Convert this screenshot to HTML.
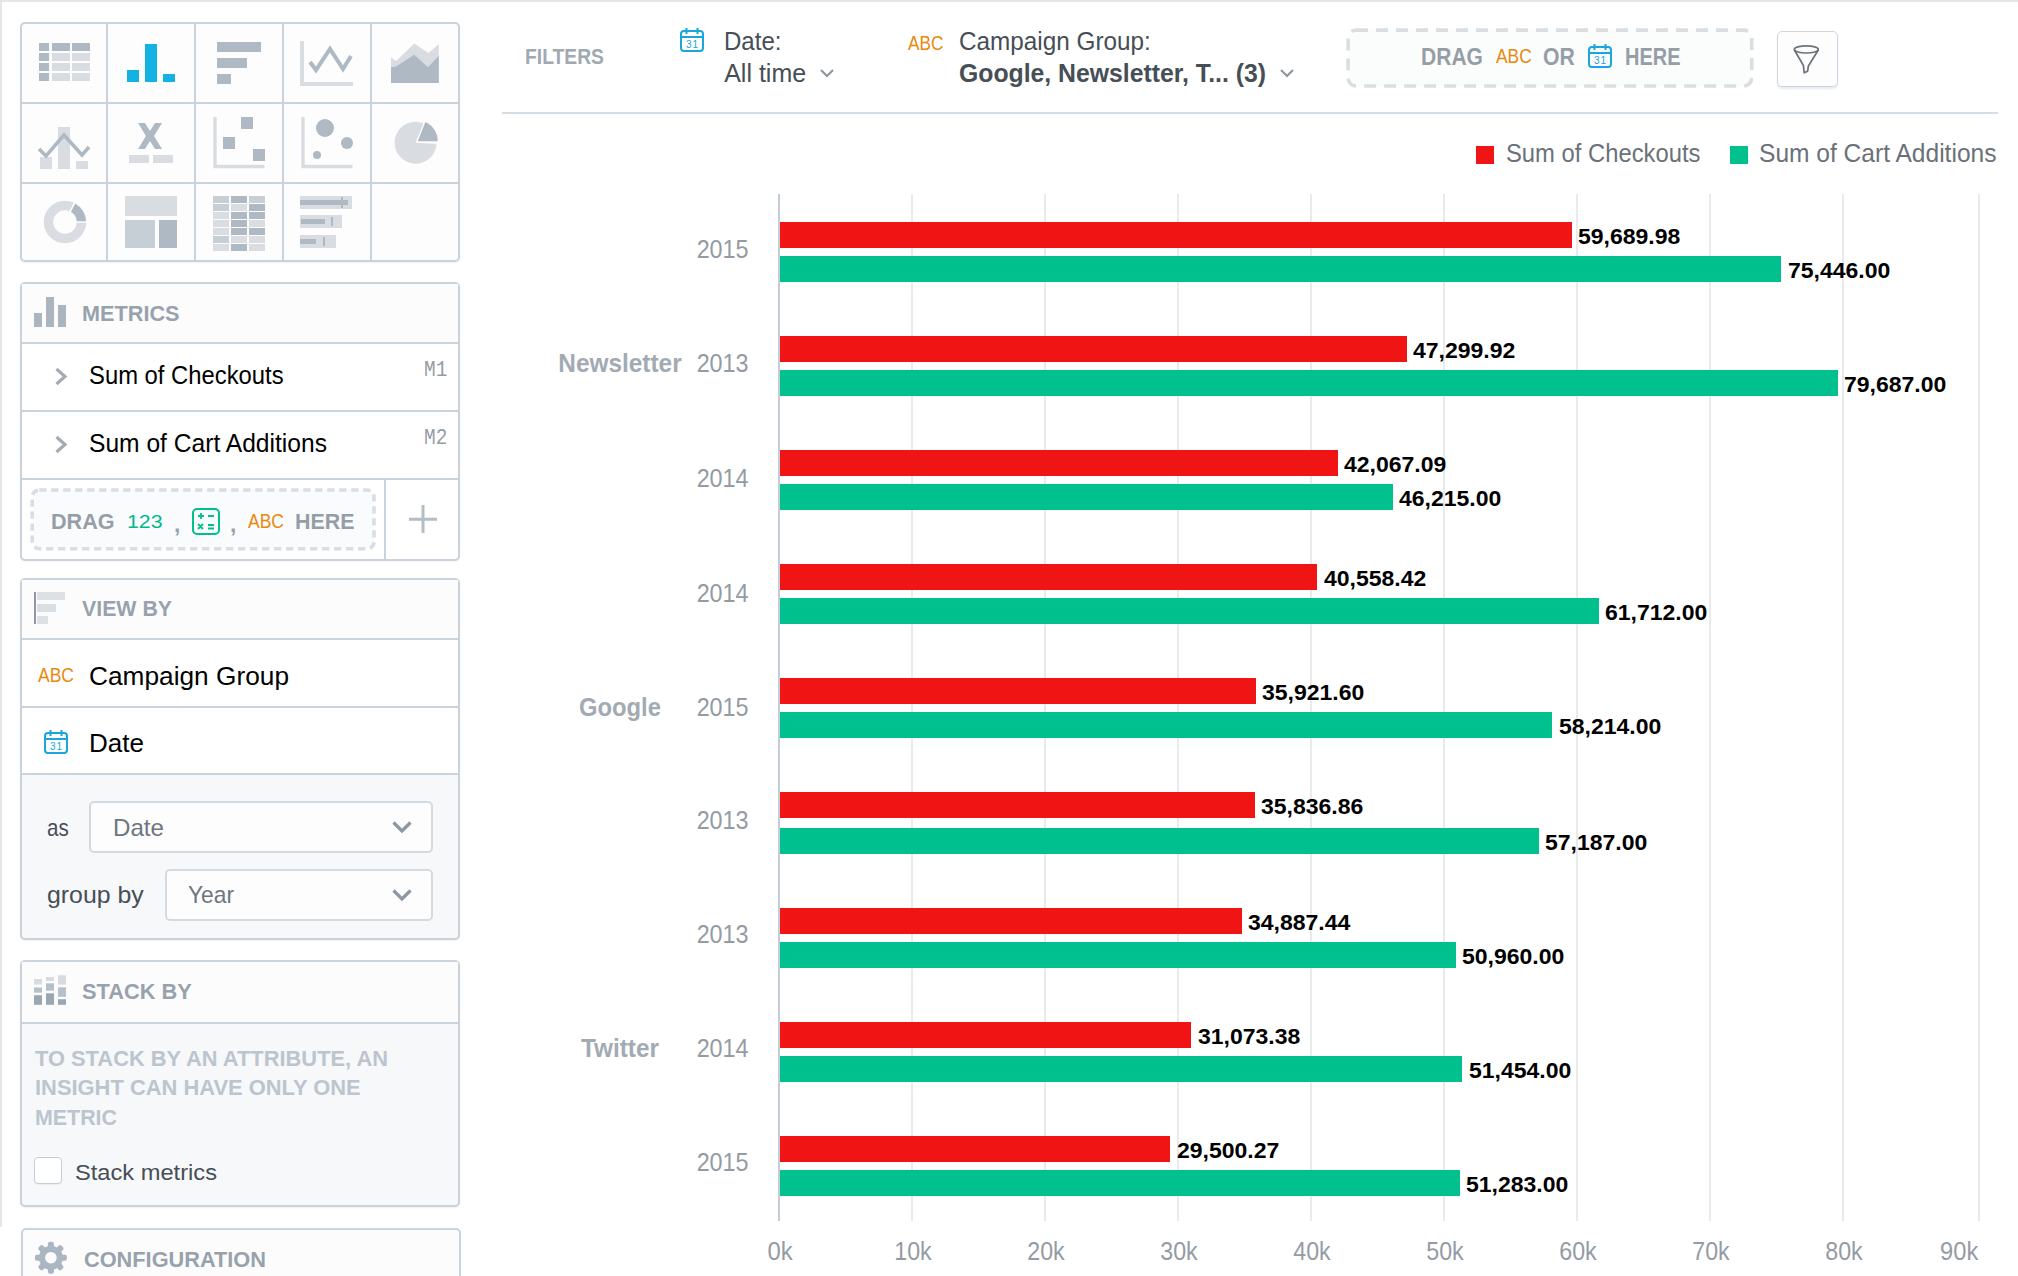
<!DOCTYPE html>
<html><head><meta charset="utf-8"><style>
html,body{margin:0;padding:0;width:2018px;height:1276px;overflow:hidden;background:#fff;position:relative;}
.t{position:absolute;white-space:nowrap;}
svg{overflow:visible}
</style></head><body>
<div style="position:absolute;left:0.0px;top:0.0px;width:2018.0px;height:2.0px;background:#e4e6e8"></div>
<div style="position:absolute;left:0.0px;top:0.0px;width:2.0px;height:1227.0px;background:#e4e6e8"></div>
<div style="position:absolute;left:20.0px;top:22.0px;width:440.0px;height:240.0px;border:2px solid #c8d3dd;border-radius:5px;box-sizing:border-box;background:#fdfdfe;box-shadow:0 1px 2px rgba(0,0,0,0.06)"></div>
<div style="position:absolute;left:106.0px;top:22.0px;width:2.0px;height:240.0px;background:#c8d3dd"></div>
<div style="position:absolute;left:194.0px;top:22.0px;width:2.0px;height:240.0px;background:#c8d3dd"></div>
<div style="position:absolute;left:282.0px;top:22.0px;width:2.0px;height:240.0px;background:#c8d3dd"></div>
<div style="position:absolute;left:370.0px;top:22.0px;width:2.0px;height:240.0px;background:#c8d3dd"></div>
<div style="position:absolute;left:20.0px;top:102.0px;width:440.0px;height:2.0px;background:#c8d3dd"></div>
<div style="position:absolute;left:20.0px;top:182.0px;width:440.0px;height:2.0px;background:#c8d3dd"></div>
<svg style="position:absolute;left:0;top:0" width="480" height="270"><rect x="39" y="43" width="10" height="8" fill="#aeb9c3"/><rect x="52" y="43" width="18" height="8" fill="#aeb9c3"/><rect x="72" y="43" width="18" height="8" fill="#aeb9c3"/><rect x="39" y="53" width="10" height="8" fill="#aeb9c3"/><rect x="52" y="53" width="18" height="8" fill="#d9dde1"/><rect x="72" y="53" width="18" height="8" fill="#d9dde1"/><rect x="39" y="63" width="10" height="8" fill="#aeb9c3"/><rect x="52" y="63" width="18" height="8" fill="#d9dde1"/><rect x="72" y="63" width="18" height="8" fill="#d9dde1"/><rect x="39" y="73" width="10" height="8" fill="#aeb9c3"/><rect x="52" y="73" width="18" height="8" fill="#d9dde1"/><rect x="72" y="73" width="18" height="8" fill="#d9dde1"/><rect x="127" y="70" width="12" height="12" fill="#14b2e2"/><rect x="145" y="44" width="12" height="38" fill="#14b2e2"/><rect x="163" y="74" width="12" height="8" fill="#14b2e2"/><rect x="217" y="42" width="44" height="10" fill="#aeb9c3"/><rect x="217" y="58" width="30" height="10" fill="#aeb9c3"/><rect x="217" y="74" width="14" height="10" fill="#aeb9c3"/><path d="M302 41 V84 H353" stroke="#d9dde1" stroke-width="4" fill="none"/><polyline points="310,62 316,70 330,49 343,69 351,56" stroke="#aeb9c3" stroke-width="4" fill="none" stroke-linejoin="miter"/><path d="M391 57.5 L396 61 L414.3 43.4 L428.5 53 L438.8 44.1 V83 H391Z" fill="#d9dde1"/><path d="M391 67.3 L396 66.4 L414.3 54.8 L428 67.3 L438.8 55.7 V83 H391Z" fill="#aeb9c3"/><rect x="40" y="157" width="12" height="12" fill="#d9dde1"/><rect x="58" y="127" width="12" height="42" fill="#d9dde1"/><rect x="76" y="161" width="12" height="8" fill="#d9dde1"/><polyline points="39,149 46,156 64,135 82,155 89,147" stroke="#aeb9c3" stroke-width="3.5" fill="none"/><path d="M138 123 H145 L150 131 L155 123 H162 L154 136 L162 149 H155 L150 141 L145 149 H138 L146 136Z" fill="#aeb9c3"/><rect x="129" y="155" width="20" height="8" fill="#d9dde1"/><rect x="153" y="155" width="20" height="8" fill="#d9dde1"/><path d="M215 117 V166.5 H264.5" stroke="#d9dde1" stroke-width="3.4" fill="none"/><rect x="241" y="117" width="12" height="12" fill="#aeb9c3"/><rect x="223" y="137" width="12" height="12" fill="#aeb9c3"/><rect x="253" y="149" width="12" height="12" fill="#aeb9c3"/><path d="M303 117 V166.5 H352.5" stroke="#d9dde1" stroke-width="3.4" fill="none"/><circle cx="325" cy="128" r="9" fill="#aeb9c3"/><circle cx="347" cy="143" r="6" fill="#aeb9c3"/><circle cx="317" cy="155" r="4" fill="#aeb9c3"/><circle cx="415.6" cy="142.7" r="21" fill="#d9dde1"/><path d="M415.6 142.7 L424.22 121.37 A23 23 0 0 1 438.57 143.90 Z" fill="#fdfdfe"/><path d="M417.8 141.2 L425.34 122.02 A21 21 0 0 1 437.80 141.20 Z" fill="#aeb9c3"/><circle cx="65" cy="222" r="16.5" fill="none" stroke="#d9dde1" stroke-width="9.5"/><path d="M74.85 203.46 A21 21 0 0 1 86 222 L76.8 222 A11.8 11.8 0 0 0 70.53 211.58 Z" fill="#aeb9c3"/><path d="M65 222 L75.35 201.46 M65 222 L88 222" stroke="#fdfdfe" stroke-width="1.6"/><rect x="125" y="196" width="52" height="20" fill="#d9dde1"/><rect x="125" y="220" width="30" height="28" fill="#c6ced6"/><rect x="159" y="220" width="18" height="28" fill="#aeb9c3"/><rect x="213" y="196" width="16" height="7" fill="#c6ced6"/><rect x="231" y="196" width="16" height="7" fill="#aeb9c3"/><rect x="249" y="196" width="16" height="7" fill="#c6ced6"/><rect x="213" y="204" width="16" height="7" fill="#c6ced6"/><rect x="231" y="204" width="16" height="7" fill="#d9dde1"/><rect x="249" y="204" width="16" height="7" fill="#aeb9c3"/><rect x="213" y="212" width="16" height="7" fill="#d9dde1"/><rect x="231" y="212" width="16" height="7" fill="#aeb9c3"/><rect x="249" y="212" width="16" height="7" fill="#aeb9c3"/><rect x="213" y="220" width="16" height="7" fill="#d9dde1"/><rect x="231" y="220" width="16" height="7" fill="#aeb9c3"/><rect x="249" y="220" width="16" height="7" fill="#d9dde1"/><rect x="213" y="228" width="16" height="7" fill="#d9dde1"/><rect x="231" y="228" width="16" height="7" fill="#aeb9c3"/><rect x="249" y="228" width="16" height="7" fill="#aeb9c3"/><rect x="213" y="236" width="16" height="7" fill="#c6ced6"/><rect x="231" y="236" width="16" height="7" fill="#d9dde1"/><rect x="249" y="236" width="16" height="7" fill="#d9dde1"/><rect x="213" y="244" width="16" height="7" fill="#d9dde1"/><rect x="231" y="244" width="16" height="7" fill="#aeb9c3"/><rect x="249" y="244" width="16" height="7" fill="#d9dde1"/><rect x="300" y="196" width="52" height="13" fill="#d9dde1"/><rect x="300" y="200" width="48" height="5" fill="#aeb9c3"/><rect x="341" y="197" width="2" height="11" fill="#aeb9c3"/><rect x="300" y="215" width="42" height="13" fill="#d9dde1"/><rect x="301" y="219" width="24" height="5" fill="#aeb9c3"/><rect x="331" y="217" width="2" height="9" fill="#aeb9c3"/><rect x="300" y="235" width="36" height="13" fill="#d9dde1"/><rect x="300" y="239" width="16" height="5" fill="#aeb9c3"/><rect x="323" y="237" width="2" height="9" fill="#aeb9c3"/></svg>
<div style="position:absolute;left:20.0px;top:282.0px;width:440.0px;height:279.0px;border:2px solid #c8d3dd;border-radius:5px;box-sizing:border-box;background:#fff;box-shadow:0 1px 2px rgba(0,0,0,0.06)"></div>
<div style="position:absolute;left:22.0px;top:284.0px;width:436.0px;height:58.0px;background:#fcfcfd"></div>
<div style="position:absolute;left:20.0px;top:342.0px;width:440.0px;height:2.0px;background:#c8d3dd"></div>
<div style="position:absolute;left:20.0px;top:410.0px;width:440.0px;height:2.0px;background:#c8d3dd"></div>
<div style="position:absolute;left:20.0px;top:478.0px;width:440.0px;height:2.0px;background:#c8d3dd"></div>
<div style="position:absolute;left:384.0px;top:480.0px;width:2.0px;height:79.0px;background:#c8d3dd"></div>
<svg style="position:absolute;left:0;top:0" width="480" height="600"><rect x="34" y="313" width="8" height="14" fill="#aab5c0"/><rect x="46" y="297" width="8" height="30" fill="#aab5c0"/><rect x="58" y="305" width="8" height="22" fill="#aab5c0"/><polyline points="56.5,369 65,376.5 56.5,384" stroke="#a3acb4" stroke-width="3.2" fill="none"/><polyline points="56.5,437 65,444.5 56.5,452" stroke="#a3acb4" stroke-width="3.2" fill="none"/><path d="M423 505 V533 M409 519.2 H437" stroke="#b3bdc6" stroke-width="3"/></svg>
<div id="t0" class="t" style="left:82.0px;top:302.1px;font-size:22.8px;line-height:22.8px;color:#97a2ad;font-weight:bold;font-family:'Liberation Sans',sans-serif;transform:scaleX(0.9504);transform-origin:left;">METRICS</div>
<div id="t1" class="t" style="left:88.5px;top:361.9px;font-size:26.0px;line-height:26.0px;color:#000;font-weight:normal;font-family:'Liberation Sans',sans-serif;transform:scaleX(0.9160);transform-origin:left;">Sum of Checkouts</div>
<div id="t2" class="t" style="left:423.8px;top:359.1px;font-size:22.3px;line-height:22.3px;color:#959da5;font-weight:normal;font-family:'Liberation Mono',monospace;transform:scaleX(0.8705);transform-origin:left;">M1</div>
<div id="t3" class="t" style="left:88.5px;top:429.9px;font-size:26.0px;line-height:26.0px;color:#000;font-weight:normal;font-family:'Liberation Sans',sans-serif;transform:scaleX(0.9464);transform-origin:left;">Sum of Cart Additions</div>
<div id="t4" class="t" style="left:423.8px;top:427.1px;font-size:22.3px;line-height:22.3px;color:#959da5;font-weight:normal;font-family:'Liberation Mono',monospace;transform:scaleX(0.8705);transform-origin:left;">M2</div>
<div style="position:absolute;left:33.0px;top:490.0px;width:341.0px;height:58.0px;background:#fafbfc;border-radius:6px"></div>
<svg style="position:absolute;left:0;top:0" width="480" height="600"><rect x="32.2" y="490" width="341.8" height="58.7" rx="7" fill="none" stroke="#d9dee2" stroke-width="3.6" stroke-dasharray="7.3 4.7"/></svg>
<div id="t5" class="t" style="left:51.0px;top:511.1px;font-size:22.0px;line-height:22.0px;color:#959ea7;font-weight:bold;font-family:'Liberation Sans',sans-serif;transform:scaleX(0.9802);transform-origin:left;">DRAG</div>
<div id="t6" class="t" style="left:127.0px;top:511.6px;font-size:19.0px;line-height:19.0px;color:#00b98a;font-weight:normal;font-family:'Liberation Sans',sans-serif;transform:scaleX(1.1198);transform-origin:left;">123</div>
<div id="t7" class="t" style="left:174.0px;top:512.5px;font-size:23.0px;line-height:23.0px;color:#9aa3ac;font-weight:bold;font-family:'Liberation Sans',sans-serif;">,</div>
<svg style="position:absolute;left:0;top:0" width="480" height="600"><rect x="193" y="509" width="26" height="25" rx="4" fill="none" stroke="#00c18d" stroke-width="2"/><path d="M198 516 h6 M201 513 v6 M208 516 h6 M198 524 l5 5 M203 524 l-5 5 M208 525 h6 M208 528.5 h6" stroke="#00c18d" stroke-width="1.8"/></svg>
<div id="t8" class="t" style="left:230.0px;top:512.5px;font-size:23.0px;line-height:23.0px;color:#9aa3ac;font-weight:bold;font-family:'Liberation Sans',sans-serif;">,</div>
<div id="t9" class="t" style="left:248.0px;top:510.8px;font-size:20.0px;line-height:20.0px;color:#e8890c;font-weight:normal;font-family:'Liberation Sans',sans-serif;transform:scaleX(0.8754);transform-origin:left;">ABC</div>
<div id="t10" class="t" style="left:295.0px;top:511.3px;font-size:22.0px;line-height:22.0px;color:#959ea7;font-weight:bold;font-family:'Liberation Sans',sans-serif;transform:scaleX(0.9734);transform-origin:left;">HERE</div>
<div style="position:absolute;left:20.0px;top:578.0px;width:440.0px;height:362.0px;border:2px solid #c8d3dd;border-radius:5px;box-sizing:border-box;background:#f7f8fa;box-shadow:0 1px 2px rgba(0,0,0,0.06)"></div>
<div style="position:absolute;left:22.0px;top:580.0px;width:436.0px;height:58.0px;background:#fcfcfd"></div>
<div style="position:absolute;left:20.0px;top:638.0px;width:440.0px;height:2.0px;background:#c8d3dd"></div>
<div style="position:absolute;left:22.0px;top:640.0px;width:436.0px;height:66.0px;background:#fff"></div>
<div style="position:absolute;left:20.0px;top:706.0px;width:440.0px;height:2.0px;background:#c8d3dd"></div>
<div style="position:absolute;left:22.0px;top:708.0px;width:436.0px;height:65.0px;background:#fff"></div>
<div style="position:absolute;left:20.0px;top:773.0px;width:440.0px;height:2.0px;background:#c8d3dd"></div>
<svg style="position:absolute;left:0;top:0" width="480" height="1000"><rect x="34" y="592" width="2" height="32" fill="#8c99a6"/><rect x="37" y="592" width="28" height="8" fill="#dde1e4"/><rect x="37" y="604" width="19" height="8" fill="#d8dfe5"/><rect x="37" y="616" width="11" height="8" fill="#dde1e4"/></svg>
<div id="t11" class="t" style="left:82.0px;top:596.6px;font-size:22.8px;line-height:22.8px;color:#97a2ad;font-weight:bold;font-family:'Liberation Sans',sans-serif;transform:scaleX(0.9349);transform-origin:left;">VIEW BY</div>
<div id="t12" class="t" style="left:38.0px;top:664.7px;font-size:20.0px;line-height:20.0px;color:#e8890c;font-weight:normal;font-family:'Liberation Sans',sans-serif;transform:scaleX(0.8754);transform-origin:left;">ABC</div>
<div id="t13" class="t" style="left:88.7px;top:662.5px;font-size:26.0px;line-height:26.0px;color:#000;font-weight:normal;font-family:'Liberation Sans',sans-serif;transform:scaleX(1.0101);transform-origin:left;">Campaign Group</div>
<div id="t14" class="t" style="left:88.7px;top:729.9px;font-size:26.0px;line-height:26.0px;color:#000;font-weight:normal;font-family:'Liberation Sans',sans-serif;transform:scaleX(1.0014);transform-origin:left;">Date</div>
<svg style="position:absolute;left:0;top:0" width="2018" height="1276"><rect x="45.0" y="733.0" width="22" height="20" rx="3" fill="none" stroke="#1aa6dc" stroke-width="2"/><path d="M44.0 739.0 H68.0 M50.5 730.0 V736.0 M61.5 730.0 V736.0" stroke="#1aa6dc" stroke-width="2"/><text x="56.5" y="749.6" font-size="10" font-family="Liberation Sans" fill="#1aa6dc" text-anchor="middle" letter-spacing="1">31</text></svg>
<div style="position:absolute;left:89.0px;top:801.0px;width:344.0px;height:52.0px;border:2px solid #d3dae2;border-radius:5px;box-sizing:border-box;background:#fdfdfe"></div>
<div style="position:absolute;left:165.0px;top:869.0px;width:268.0px;height:52.0px;border:2px solid #d3dae2;border-radius:5px;box-sizing:border-box;background:#fdfdfe"></div>
<svg style="position:absolute;left:0;top:0" width="480" height="1000"><polyline points="393.5,822.5 402,831 410.5,822.5" stroke="#8e979f" stroke-width="3.2" fill="none"/><polyline points="393.5,890.5 402,899 410.5,890.5" stroke="#8e979f" stroke-width="3.2" fill="none"/></svg>
<div id="t15" class="t" style="left:46.8px;top:815.6px;font-size:24.0px;line-height:24.0px;color:#464e56;font-weight:normal;font-family:'Liberation Sans',sans-serif;transform:scaleX(0.8557);transform-origin:left;">as</div>
<div id="t16" class="t" style="left:113.0px;top:815.6px;font-size:24.0px;line-height:24.0px;color:#6d7680;font-weight:normal;font-family:'Liberation Sans',sans-serif;transform:scaleX(1.0059);transform-origin:left;">Date</div>
<div id="t17" class="t" style="left:46.8px;top:883.1px;font-size:24.0px;line-height:24.0px;color:#464e56;font-weight:normal;font-family:'Liberation Sans',sans-serif;transform:scaleX(1.0353);transform-origin:left;">group by</div>
<div id="t18" class="t" style="left:187.6px;top:883.1px;font-size:24.0px;line-height:24.0px;color:#6d7680;font-weight:normal;font-family:'Liberation Sans',sans-serif;transform:scaleX(0.9485);transform-origin:left;">Year</div>
<div style="position:absolute;left:20.0px;top:960.0px;width:440.0px;height:247.0px;border:2px solid #c8d3dd;border-radius:5px;box-sizing:border-box;background:#f7f8fa;box-shadow:0 1px 2px rgba(0,0,0,0.06)"></div>
<div style="position:absolute;left:22.0px;top:962.0px;width:436.0px;height:60.0px;background:#fcfcfd"></div>
<div style="position:absolute;left:20.0px;top:1022.0px;width:440.0px;height:2.0px;background:#c8d3dd"></div>
<svg style="position:absolute;left:0;top:0" width="480" height="1276"><rect x="34" y="979.0" width="8" height="5.5" fill="#d8dcdf"/><rect x="34" y="987.5" width="8" height="5.2" fill="#b5c0ca"/><rect x="34" y="995.2" width="8" height="9.6" fill="#9ba7b1"/><rect x="46" y="977.0" width="8" height="4.0" fill="#d8dcdf"/><rect x="46" y="983.3" width="8" height="7.4" fill="#b5c0ca"/><rect x="46" y="993.3" width="8" height="11.5" fill="#9ba7b1"/><rect x="58" y="975.2" width="8" height="9.4" fill="#d8dcdf"/><rect x="58" y="987.3" width="8" height="9.5" fill="#b5c0ca"/><rect x="58" y="999.2" width="8" height="5.6" fill="#9ba7b1"/></svg>
<div id="t19" class="t" style="left:82.4px;top:979.6px;font-size:22.8px;line-height:22.8px;color:#97a2ad;font-weight:bold;font-family:'Liberation Sans',sans-serif;transform:scaleX(0.9561);transform-origin:left;">STACK BY</div>
<div id="t20" class="t" style="left:35.0px;top:1047.7px;font-size:22.0px;line-height:22.0px;color:#bcc5ce;font-weight:bold;font-family:'Liberation Sans',sans-serif;transform:scaleX(0.9936);transform-origin:left;">TO STACK BY AN ATTRIBUTE, AN</div>
<div id="t21" class="t" style="left:35.0px;top:1077.3px;font-size:22.0px;line-height:22.0px;color:#bcc5ce;font-weight:bold;font-family:'Liberation Sans',sans-serif;transform:scaleX(0.9954);transform-origin:left;">INSIGHT CAN HAVE ONLY ONE</div>
<div id="t22" class="t" style="left:35.0px;top:1106.9px;font-size:22.0px;line-height:22.0px;color:#bcc5ce;font-weight:bold;font-family:'Liberation Sans',sans-serif;transform:scaleX(0.9724);transform-origin:left;">METRIC</div>
<div style="position:absolute;left:34.0px;top:1156.5px;width:28.0px;height:27.5px;border:1.6px solid #c3ced8;border-radius:4px;box-sizing:border-box;background:#fff;box-shadow:0 1px 1px rgba(0,0,0,0.05)"></div>
<div id="t23" class="t" style="left:75.0px;top:1161.5px;font-size:22.0px;line-height:22.0px;color:#464e56;font-weight:normal;font-family:'Liberation Sans',sans-serif;transform:scaleX(1.0755);transform-origin:left;">Stack metrics</div>
<div style="position:absolute;left:21.0px;top:1228.0px;width:440.0px;height:60.0px;border:2px solid #c8d3dd;border-radius:5px;box-sizing:border-box;background:#fcfcfd"></div>
<svg style="position:absolute;left:0;top:0" width="480" height="1276"><g transform="translate(50.9 1257.7)" fill="#aab6c1"><rect x="-3" y="-16" width="6" height="8" rx="2" transform="rotate(0)"/><rect x="-3" y="-16" width="6" height="8" rx="2" transform="rotate(45)"/><rect x="-3" y="-16" width="6" height="8" rx="2" transform="rotate(90)"/><rect x="-3" y="-16" width="6" height="8" rx="2" transform="rotate(135)"/><rect x="-3" y="-16" width="6" height="8" rx="2" transform="rotate(180)"/><rect x="-3" y="-16" width="6" height="8" rx="2" transform="rotate(225)"/><rect x="-3" y="-16" width="6" height="8" rx="2" transform="rotate(270)"/><rect x="-3" y="-16" width="6" height="8" rx="2" transform="rotate(315)"/><circle r="12"/><circle r="5.8" fill="#fcfcfd"/></g></svg>
<div id="t24" class="t" style="left:83.7px;top:1247.8px;font-size:22.8px;line-height:22.8px;color:#97a2ad;font-weight:bold;font-family:'Liberation Sans',sans-serif;transform:scaleX(0.9538);transform-origin:left;">CONFIGURATION</div>
<div style="position:absolute;left:502.0px;top:112.0px;width:1496.0px;height:2.0px;background:#d5dde5"></div>
<div id="t25" class="t" style="left:524.7px;top:45.4px;font-size:22.8px;line-height:22.8px;color:#a0a9b2;font-weight:bold;font-family:'Liberation Sans',sans-serif;transform:scaleX(0.8468);transform-origin:left;">FILTERS</div>
<svg style="position:absolute;left:0;top:0" width="2018" height="1276"><rect x="681.0" y="31.0" width="22" height="20" rx="3" fill="none" stroke="#1aa6dc" stroke-width="2"/><path d="M680.0 37.0 H704.0 M686.5 28.0 V34.0 M697.5 28.0 V34.0" stroke="#1aa6dc" stroke-width="2"/><text x="692.5" y="47.6" font-size="10" font-family="Liberation Sans" fill="#1aa6dc" text-anchor="middle" letter-spacing="1">31</text></svg>
<div id="t26" class="t" style="left:724.2px;top:29.0px;font-size:25.0px;line-height:25.0px;color:#464e56;font-weight:normal;font-family:'Liberation Sans',sans-serif;transform:scaleX(0.9621);transform-origin:left;">Date:</div>
<div id="t27" class="t" style="left:724.2px;top:60.5px;font-size:25.0px;line-height:25.0px;color:#464e56;font-weight:normal;font-family:'Liberation Sans',sans-serif;">All time</div>
<svg style="position:absolute;left:0;top:0" width="1400" height="120"><polyline points="821,70 827,76 833,70" stroke="#8e979f" stroke-width="2.2" fill="none"/><polyline points="1281,70 1287,76 1293,70" stroke="#8e979f" stroke-width="2.2" fill="none"/></svg>
<div id="t28" class="t" style="left:908.3px;top:33.3px;font-size:20.0px;line-height:20.0px;color:#e8890c;font-weight:normal;font-family:'Liberation Sans',sans-serif;transform:scaleX(0.8608);transform-origin:left;">ABC</div>
<div id="t29" class="t" style="left:959.4px;top:29.0px;font-size:25.0px;line-height:25.0px;color:#464e56;font-weight:normal;font-family:'Liberation Sans',sans-serif;transform:scaleX(0.9720);transform-origin:left;">Campaign Group:</div>
<div id="t30" class="t" style="left:959.4px;top:60.5px;font-size:25.0px;line-height:25.0px;color:#464e56;font-weight:bold;font-family:'Liberation Sans',sans-serif;transform:scaleX(0.9910);transform-origin:left;">Google, Newsletter, T... (3)</div>
<div style="position:absolute;left:1348.0px;top:30.0px;width:404.0px;height:56.0px;background:#fbfcfc;border-radius:7px"></div>
<svg style="position:absolute;left:0;top:0" width="2018" height="200"><rect x="1348.1" y="30.1" width="403.6" height="55.9" rx="8" fill="none" stroke="#d9dee2" stroke-width="3.6" stroke-dasharray="12 8"/></svg>
<div id="t31" class="t" style="left:1421.4px;top:46.2px;font-size:23.3px;line-height:23.3px;color:#959ea7;font-weight:bold;font-family:'Liberation Sans',sans-serif;transform:scaleX(0.9037);transform-origin:left;">DRAG</div>
<div id="t32" class="t" style="left:1496.0px;top:47.2px;font-size:19.3px;line-height:19.3px;color:#e8890c;font-weight:normal;font-family:'Liberation Sans',sans-serif;transform:scaleX(0.9028);transform-origin:left;">ABC</div>
<div id="t33" class="t" style="left:1543.0px;top:46.2px;font-size:23.3px;line-height:23.3px;color:#959ea7;font-weight:bold;font-family:'Liberation Sans',sans-serif;transform:scaleX(0.9098);transform-origin:left;">OR</div>
<svg style="position:absolute;left:0;top:0" width="2018" height="1276"><rect x="1589.0" y="47.0" width="22" height="20" rx="3" fill="none" stroke="#1aa6dc" stroke-width="2"/><path d="M1588.0 53.0 H1612.0 M1594.5 44.0 V50.0 M1605.5 44.0 V50.0" stroke="#1aa6dc" stroke-width="2"/><text x="1600.5" y="63.6" font-size="10" font-family="Liberation Sans" fill="#1aa6dc" text-anchor="middle" letter-spacing="1">31</text></svg>
<div id="t34" class="t" style="left:1625.0px;top:46.2px;font-size:23.3px;line-height:23.3px;color:#959ea7;font-weight:bold;font-family:'Liberation Sans',sans-serif;transform:scaleX(0.8573);transform-origin:left;">HERE</div>
<div style="position:absolute;left:1777.0px;top:30.5px;width:60.5px;height:56.0px;border:1.6px solid #cdd6de;border-radius:5px;box-sizing:border-box;background:#fdfdfe;box-shadow:0 2px 2px rgba(30,50,80,0.10)"></div>
<svg style="position:absolute;left:0;top:0" width="2018" height="200"><ellipse cx="1806.3" cy="49.4" rx="12" ry="3.6" fill="none" stroke="#6b737b" stroke-width="1.7"/><path d="M1794.4 50 L1803.4 65.5 L1804.2 72.8 L1807.6 71.2 L1808.4 66 L1818.3 50" fill="none" stroke="#6b737b" stroke-width="1.7" stroke-linejoin="round"/></svg>
<div style="position:absolute;left:1476.0px;top:146.0px;width:18.0px;height:18.0px;background:#f01414"></div>
<div id="t35" class="t" style="left:1505.6px;top:141.3px;font-size:25.5px;line-height:25.5px;color:#6a7179;font-weight:normal;font-family:'Liberation Sans',sans-serif;transform:scaleX(0.9330);transform-origin:left;">Sum of Checkouts</div>
<div style="position:absolute;left:1730.0px;top:146.0px;width:18.0px;height:18.0px;background:#00c18d"></div>
<div id="t36" class="t" style="left:1759.0px;top:141.3px;font-size:25.5px;line-height:25.5px;color:#6a7179;font-weight:normal;font-family:'Liberation Sans',sans-serif;transform:scaleX(0.9630);transform-origin:left;">Sum of Cart Additions</div>
<div style="position:absolute;left:911.0px;top:194.0px;width:2.0px;height:1027.0px;background:#e9eaec"></div>
<div style="position:absolute;left:1044.0px;top:194.0px;width:2.0px;height:1027.0px;background:#e9eaec"></div>
<div style="position:absolute;left:1177.0px;top:194.0px;width:2.0px;height:1027.0px;background:#e9eaec"></div>
<div style="position:absolute;left:1310.0px;top:194.0px;width:2.0px;height:1027.0px;background:#e9eaec"></div>
<div style="position:absolute;left:1443.0px;top:194.0px;width:2.0px;height:1027.0px;background:#e9eaec"></div>
<div style="position:absolute;left:1576.0px;top:194.0px;width:2.0px;height:1027.0px;background:#e9eaec"></div>
<div style="position:absolute;left:1709.0px;top:194.0px;width:2.0px;height:1027.0px;background:#e9eaec"></div>
<div style="position:absolute;left:1842.0px;top:194.0px;width:2.0px;height:1027.0px;background:#e9eaec"></div>
<div style="position:absolute;left:1978.0px;top:194.0px;width:2.0px;height:1027.0px;background:#e9eaec"></div>
<div style="position:absolute;left:778.0px;top:194.0px;width:2.0px;height:1027.0px;background:#c3cdd8"></div>
<div style="position:absolute;left:780.0px;top:222.0px;width:791.9px;height:26.0px;background:#f01414"></div>
<div style="position:absolute;left:780.0px;top:256.0px;width:1001.4px;height:26.0px;background:#00c18d"></div>
<div id="t37" class="t" style="left:1578.2px;top:224.5px;font-size:22.7px;line-height:22.7px;color:#000;font-weight:bold;font-family:'Liberation Sans',sans-serif;transform:scaleX(1.0135);transform-origin:left;">59,689.98</div>
<div id="t38" class="t" style="left:1787.7px;top:258.5px;font-size:22.7px;line-height:22.7px;color:#000;font-weight:bold;font-family:'Liberation Sans',sans-serif;transform:scaleX(1.0135);transform-origin:left;">75,446.00</div>
<div id="t39" class="t" style="right:1269.0px;top:236.6px;font-size:25.0px;line-height:25.0px;color:#949ba3;font-weight:normal;font-family:'Liberation Sans',sans-serif;transform:scaleX(0.9348);transform-origin:right;">2015</div>
<div style="position:absolute;left:780.0px;top:336.0px;width:627.1px;height:26.0px;background:#f01414"></div>
<div style="position:absolute;left:780.0px;top:370.0px;width:1057.8px;height:26.0px;background:#00c18d"></div>
<div id="t40" class="t" style="left:1413.4px;top:338.5px;font-size:22.7px;line-height:22.7px;color:#000;font-weight:bold;font-family:'Liberation Sans',sans-serif;transform:scaleX(1.0135);transform-origin:left;">47,299.92</div>
<div id="t41" class="t" style="left:1844.1px;top:372.5px;font-size:22.7px;line-height:22.7px;color:#000;font-weight:bold;font-family:'Liberation Sans',sans-serif;transform:scaleX(1.0135);transform-origin:left;">79,687.00</div>
<div id="t42" class="t" style="right:1269.0px;top:350.6px;font-size:25.0px;line-height:25.0px;color:#949ba3;font-weight:normal;font-family:'Liberation Sans',sans-serif;transform:scaleX(0.9348);transform-origin:right;">2013</div>
<div id="t43" class="t" style="left:619.5px;top:350.6px;font-size:25.0px;line-height:25.0px;color:#a2aab2;font-weight:bold;font-family:'Liberation Sans',sans-serif;transform:translateX(-50%) scaleX(0.9751);">Newsletter</div>
<div style="position:absolute;left:780.0px;top:450.0px;width:557.5px;height:26.0px;background:#f01414"></div>
<div style="position:absolute;left:780.0px;top:484.0px;width:612.7px;height:26.0px;background:#00c18d"></div>
<div id="t44" class="t" style="left:1343.8px;top:452.5px;font-size:22.7px;line-height:22.7px;color:#000;font-weight:bold;font-family:'Liberation Sans',sans-serif;transform:scaleX(1.0135);transform-origin:left;">42,067.09</div>
<div id="t45" class="t" style="left:1399.0px;top:486.5px;font-size:22.7px;line-height:22.7px;color:#000;font-weight:bold;font-family:'Liberation Sans',sans-serif;transform:scaleX(1.0135);transform-origin:left;">46,215.00</div>
<div id="t46" class="t" style="right:1269.0px;top:466.1px;font-size:25.0px;line-height:25.0px;color:#949ba3;font-weight:normal;font-family:'Liberation Sans',sans-serif;transform:scaleX(0.9348);transform-origin:right;">2014</div>
<div style="position:absolute;left:780.0px;top:564.0px;width:537.4px;height:26.0px;background:#f01414"></div>
<div style="position:absolute;left:780.0px;top:598.0px;width:818.8px;height:26.0px;background:#00c18d"></div>
<div id="t47" class="t" style="left:1323.7px;top:566.5px;font-size:22.7px;line-height:22.7px;color:#000;font-weight:bold;font-family:'Liberation Sans',sans-serif;transform:scaleX(1.0135);transform-origin:left;">40,558.42</div>
<div id="t48" class="t" style="left:1605.1px;top:600.5px;font-size:22.7px;line-height:22.7px;color:#000;font-weight:bold;font-family:'Liberation Sans',sans-serif;transform:scaleX(1.0135);transform-origin:left;">61,712.00</div>
<div id="t49" class="t" style="right:1269.0px;top:580.8px;font-size:25.0px;line-height:25.0px;color:#949ba3;font-weight:normal;font-family:'Liberation Sans',sans-serif;transform:scaleX(0.9348);transform-origin:right;">2014</div>
<div style="position:absolute;left:780.0px;top:678.0px;width:475.8px;height:26.0px;background:#f01414"></div>
<div style="position:absolute;left:780.0px;top:712.0px;width:772.2px;height:26.0px;background:#00c18d"></div>
<div id="t50" class="t" style="left:1262.1px;top:680.5px;font-size:22.7px;line-height:22.7px;color:#000;font-weight:bold;font-family:'Liberation Sans',sans-serif;transform:scaleX(1.0135);transform-origin:left;">35,921.60</div>
<div id="t51" class="t" style="left:1558.5px;top:714.5px;font-size:22.7px;line-height:22.7px;color:#000;font-weight:bold;font-family:'Liberation Sans',sans-serif;transform:scaleX(1.0135);transform-origin:left;">58,214.00</div>
<div id="t52" class="t" style="right:1269.0px;top:694.5px;font-size:25.0px;line-height:25.0px;color:#949ba3;font-weight:normal;font-family:'Liberation Sans',sans-serif;transform:scaleX(0.9348);transform-origin:right;">2015</div>
<div id="t53" class="t" style="left:619.5px;top:694.5px;font-size:25.0px;line-height:25.0px;color:#a2aab2;font-weight:bold;font-family:'Liberation Sans',sans-serif;transform:translateX(-50%) scaleX(0.9500);">Google</div>
<div style="position:absolute;left:780.0px;top:792.0px;width:474.6px;height:26.0px;background:#f01414"></div>
<div style="position:absolute;left:780.0px;top:828.0px;width:758.6px;height:26.0px;background:#00c18d"></div>
<div id="t54" class="t" style="left:1260.9px;top:794.5px;font-size:22.7px;line-height:22.7px;color:#000;font-weight:bold;font-family:'Liberation Sans',sans-serif;transform:scaleX(1.0135);transform-origin:left;">35,836.86</div>
<div id="t55" class="t" style="left:1544.9px;top:830.5px;font-size:22.7px;line-height:22.7px;color:#000;font-weight:bold;font-family:'Liberation Sans',sans-serif;transform:scaleX(1.0135);transform-origin:left;">57,187.00</div>
<div id="t56" class="t" style="right:1269.0px;top:808.0px;font-size:25.0px;line-height:25.0px;color:#949ba3;font-weight:normal;font-family:'Liberation Sans',sans-serif;transform:scaleX(0.9348);transform-origin:right;">2013</div>
<div style="position:absolute;left:780.0px;top:908.0px;width:462.0px;height:26.0px;background:#f01414"></div>
<div style="position:absolute;left:780.0px;top:942.0px;width:675.8px;height:26.0px;background:#00c18d"></div>
<div id="t57" class="t" style="left:1248.3px;top:910.5px;font-size:22.7px;line-height:22.7px;color:#000;font-weight:bold;font-family:'Liberation Sans',sans-serif;transform:scaleX(1.0135);transform-origin:left;">34,887.44</div>
<div id="t58" class="t" style="left:1462.1px;top:944.5px;font-size:22.7px;line-height:22.7px;color:#000;font-weight:bold;font-family:'Liberation Sans',sans-serif;transform:scaleX(1.0135);transform-origin:left;">50,960.00</div>
<div id="t59" class="t" style="right:1269.0px;top:922.2px;font-size:25.0px;line-height:25.0px;color:#949ba3;font-weight:normal;font-family:'Liberation Sans',sans-serif;transform:scaleX(0.9348);transform-origin:right;">2013</div>
<div style="position:absolute;left:780.0px;top:1022.0px;width:411.3px;height:26.0px;background:#f01414"></div>
<div style="position:absolute;left:780.0px;top:1056.0px;width:682.3px;height:26.0px;background:#00c18d"></div>
<div id="t60" class="t" style="left:1197.6px;top:1024.5px;font-size:22.7px;line-height:22.7px;color:#000;font-weight:bold;font-family:'Liberation Sans',sans-serif;transform:scaleX(1.0135);transform-origin:left;">31,073.38</div>
<div id="t61" class="t" style="left:1468.6px;top:1058.5px;font-size:22.7px;line-height:22.7px;color:#000;font-weight:bold;font-family:'Liberation Sans',sans-serif;transform:scaleX(1.0135);transform-origin:left;">51,454.00</div>
<div id="t62" class="t" style="right:1269.0px;top:1036.3px;font-size:25.0px;line-height:25.0px;color:#949ba3;font-weight:normal;font-family:'Liberation Sans',sans-serif;transform:scaleX(0.9348);transform-origin:right;">2014</div>
<div id="t63" class="t" style="left:619.5px;top:1036.3px;font-size:25.0px;line-height:25.0px;color:#a2aab2;font-weight:bold;font-family:'Liberation Sans',sans-serif;transform:translateX(-50%) scaleX(0.9739);">Twitter</div>
<div style="position:absolute;left:780.0px;top:1136.0px;width:390.4px;height:26.0px;background:#f01414"></div>
<div style="position:absolute;left:780.0px;top:1170.0px;width:680.1px;height:26.0px;background:#00c18d"></div>
<div id="t64" class="t" style="left:1176.7px;top:1138.5px;font-size:22.7px;line-height:22.7px;color:#000;font-weight:bold;font-family:'Liberation Sans',sans-serif;transform:scaleX(1.0135);transform-origin:left;">29,500.27</div>
<div id="t65" class="t" style="left:1466.4px;top:1172.5px;font-size:22.7px;line-height:22.7px;color:#000;font-weight:bold;font-family:'Liberation Sans',sans-serif;transform:scaleX(1.0135);transform-origin:left;">51,283.00</div>
<div id="t66" class="t" style="right:1269.0px;top:1150.3px;font-size:25.0px;line-height:25.0px;color:#949ba3;font-weight:normal;font-family:'Liberation Sans',sans-serif;transform:scaleX(0.9348);transform-origin:right;">2015</div>
<div id="t67" class="t" style="left:779.5px;top:1238.8px;font-size:25.0px;line-height:25.0px;color:#949ba3;font-weight:normal;font-family:'Liberation Sans',sans-serif;transform:translateX(-50%) scaleX(0.9543);">0k</div>
<div id="t68" class="t" style="left:912.5px;top:1238.8px;font-size:25.0px;line-height:25.0px;color:#949ba3;font-weight:normal;font-family:'Liberation Sans',sans-serif;transform:translateX(-50%) scaleX(0.9278);">10k</div>
<div id="t69" class="t" style="left:1045.5px;top:1238.8px;font-size:25.0px;line-height:25.0px;color:#949ba3;font-weight:normal;font-family:'Liberation Sans',sans-serif;transform:translateX(-50%) scaleX(0.9278);">20k</div>
<div id="t70" class="t" style="left:1178.5px;top:1238.8px;font-size:25.0px;line-height:25.0px;color:#949ba3;font-weight:normal;font-family:'Liberation Sans',sans-serif;transform:translateX(-50%) scaleX(0.9278);">30k</div>
<div id="t71" class="t" style="left:1311.5px;top:1238.8px;font-size:25.0px;line-height:25.0px;color:#949ba3;font-weight:normal;font-family:'Liberation Sans',sans-serif;transform:translateX(-50%) scaleX(0.9278);">40k</div>
<div id="t72" class="t" style="left:1444.5px;top:1238.8px;font-size:25.0px;line-height:25.0px;color:#949ba3;font-weight:normal;font-family:'Liberation Sans',sans-serif;transform:translateX(-50%) scaleX(0.9278);">50k</div>
<div id="t73" class="t" style="left:1577.5px;top:1238.8px;font-size:25.0px;line-height:25.0px;color:#949ba3;font-weight:normal;font-family:'Liberation Sans',sans-serif;transform:translateX(-50%) scaleX(0.9278);">60k</div>
<div id="t74" class="t" style="left:1710.5px;top:1238.8px;font-size:25.0px;line-height:25.0px;color:#949ba3;font-weight:normal;font-family:'Liberation Sans',sans-serif;transform:translateX(-50%) scaleX(0.9278);">70k</div>
<div id="t75" class="t" style="left:1843.5px;top:1238.8px;font-size:25.0px;line-height:25.0px;color:#949ba3;font-weight:normal;font-family:'Liberation Sans',sans-serif;transform:translateX(-50%) scaleX(0.9278);">80k</div>
<div id="t76" class="t" style="right:40.0px;top:1238.8px;font-size:25.0px;line-height:25.0px;color:#949ba3;font-weight:normal;font-family:'Liberation Sans',sans-serif;transform:scaleX(0.9476);transform-origin:right;">90k</div>
</body></html>
